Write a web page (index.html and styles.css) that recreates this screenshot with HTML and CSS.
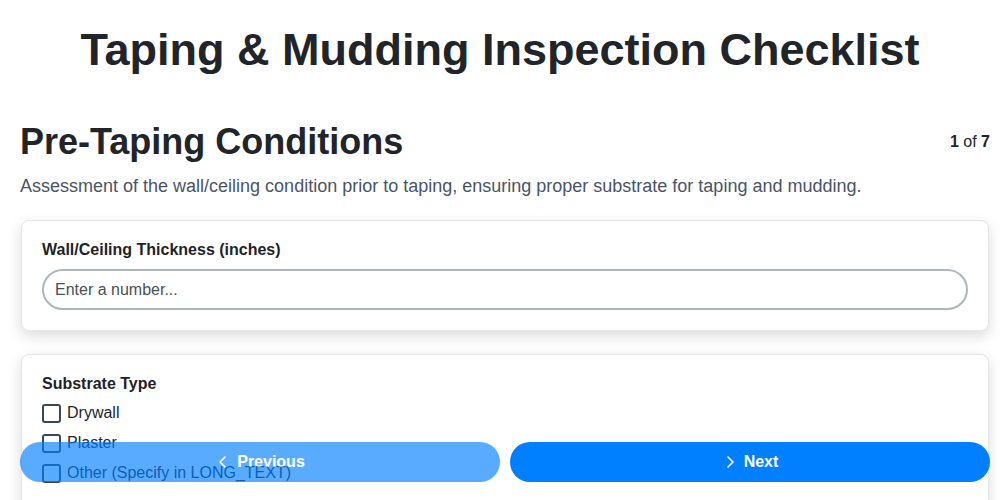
FILE: index.html
```html
<!DOCTYPE html>
<html lang="en">
<head>
<meta charset="utf-8">
<title>Taping &amp; Mudding Inspection Checklist</title>
<link rel="stylesheet" href="styles.css">
</head>
<body>
<header class="page-header">
  <h1 class="page-title">Taping &amp; Mudding Inspection Checklist</h1>
</header>
<main class="main">
  <div class="section-head">
    <h2 class="section-title">Pre-Taping Conditions</h2>
    <div class="step"><b>1</b> of <b>7</b></div>
  </div>
  <p class="section-desc">Assessment of the wall/ceiling condition prior to taping, ensuring proper substrate for taping and mudding.</p>

  <div class="card">
    <label class="field-label" for="thick">Wall/Ceiling Thickness (inches)</label>
    <input class="text-input" id="thick" type="text" placeholder="Enter a number...">
  </div>

  <div class="card">
    <div class="field-label group-label">Substrate Type</div>
    <label class="check-row"><span class="box"></span><span>Drywall</span></label>
    <label class="check-row"><span class="box"></span><span>Plaster</span></label>
    <label class="check-row"><span class="box"></span><span>Other (Specify in LONG_TEXT)</span></label>
  </div>
</main>
<nav class="nav-bar">
  <button class="btn btn-prev" type="button">
    <svg class="chev" viewBox="0 0 16 16" width="16" height="16"><path d="M10 3 L5 8 L10 13" fill="none" stroke="#fff" stroke-width="1.6" stroke-linecap="round" stroke-linejoin="round"/></svg>
    Previous
  </button>
  <button class="btn btn-next" type="button">
    <svg class="chev" viewBox="0 0 16 16" width="16" height="16"><path d="M6 3 L11 8 L6 13" fill="none" stroke="#fff" stroke-width="1.6" stroke-linecap="round" stroke-linejoin="round"/></svg>
    Next
  </button>
</nav>
</body>
</html>
```
FILE: styles.css
```css
* { box-sizing: border-box; }
html, body { margin: 0; padding: 0; background: #fff; }
body {
  font-family: "Liberation Sans", Arial, sans-serif;
  color: #212529;
  width: 1000px;
  height: 500px;
  overflow: hidden;
}
.page-header { padding: 24px 0 0; text-align: center; }
.page-title {
  margin: 0;
  font-size: 45px;
  line-height: 52px;
  font-weight: 700;
  color: #212529;
}
.main { padding: 44px 10px 0 20px; }
.section-head {
  display: flex;
  justify-content: space-between;
  align-items: center;
}
.section-title {
  margin: 0;
  font-size: 36px;
  line-height: 44px;
  font-weight: 700;
}
.step { font-size: 16px; color: #212529; }
.step b { font-weight: 700; }
.section-desc {
  margin: 10px 0 22px;
  font-size: 18px;
  line-height: 24px;
  color: #4a5466;
}
.card {
  background: #fff;
  border: 1px solid #e4e6ea;
  border-radius: 8px;
  box-shadow: 0 5px 14px rgba(0, 0, 0, 0.14);
  padding: 19px 20px 20px;
  margin: 0 1px 23px;
}
.field-label {
  display: block;
  font-size: 16px;
  line-height: 20px;
  font-weight: 700;
  color: #1f2328;
  margin-bottom: 9px;
}
.group-label { margin-bottom: 7px; }
.text-input {
  display: block;
  width: 100%;
  height: 41px;
  border: 2px solid #adb5bd;
  border-radius: 21px;
  padding: 0 11px;
  font-family: inherit;
  font-size: 16px;
  color: #333;
  background: #fff;
  outline: none;
}
.text-input::placeholder { color: #495057; opacity: 1; }
.check-row {
  display: flex;
  align-items: center;
  gap: 6px;
  height: 24px;
  margin-bottom: 6px;
  font-size: 16px;
  color: #212529;
}
.box {
  width: 19px;
  height: 19px;
  border: 2px solid #3c4656;
  border-radius: 3px;
  flex: none;
}
.nav-bar {
  position: fixed;
  left: 20px;
  right: 10px;
  bottom: 18px;
  display: flex;
  gap: 10px;
}
.btn {
  flex: 1;
  height: 40px;
  border: none;
  border-radius: 20px;
  background: #007fff;
  color: #fff;
  font-family: inherit;
  font-size: 16px;
  font-weight: 700;
  display: flex;
  align-items: center;
  justify-content: center;
  gap: 6px;
  padding: 0;
}
.btn-prev { opacity: 0.65; }
.chev { display: block; }
```
